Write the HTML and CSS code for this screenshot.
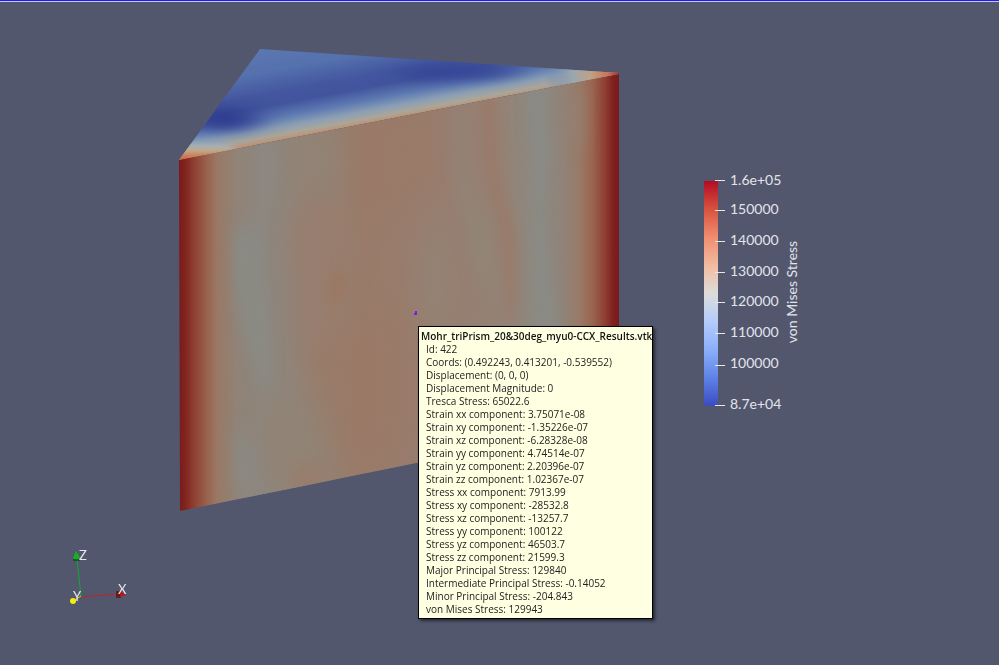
FILE: index.html
```html
<!DOCTYPE html>
<html lang="en">
<head>
<meta charset="utf-8">
<title>von Mises Stress</title>
<link rel="stylesheet" href="styles.css">
</head>
<body>
<main class="view">
  <svg class="scene" viewBox="0 0 999 665" role="img" aria-label="Stress on a triangular prism">
    <defs>
      <linearGradient id="front" gradientUnits="userSpaceOnUse" x1="179" y1="0" x2="619" y2="0">
        <stop offset="0" stop-color="#7a1a1b"/>
        <stop offset=".015" stop-color="#81251f"/>
        <stop offset=".035" stop-color="#8f4033"/>
        <stop offset=".06" stop-color="#985f4b"/>
        <stop offset=".085" stop-color="#997863"/>
        <stop offset=".13" stop-color="#918377"/>
        <stop offset=".19" stop-color="#8d8780"/>
        <stop offset=".24" stop-color="#90857a"/>
        <stop offset=".33" stop-color="#958070"/>
        <stop offset=".42" stop-color="#997b69"/>
        <stop offset=".54" stop-color="#987d6e"/>
        <stop offset=".65" stop-color="#977f71"/>
        <stop offset=".75" stop-color="#938477"/>
        <stop offset=".82" stop-color="#8c8982"/>
        <stop offset=".87" stop-color="#908479"/>
        <stop offset=".91" stop-color="#987a67"/>
        <stop offset=".94" stop-color="#9a654f"/>
        <stop offset=".97" stop-color="#8d3c31"/>
        <stop offset=".985" stop-color="#802220"/>
        <stop offset="1" stop-color="#78191b"/>
      </linearGradient>
      <linearGradient id="top" gradientUnits="userSpaceOnUse" x1="260" y1="49" x2="277" y2="140">
        <stop offset="0" stop-color="#5c77b0"/>
        <stop offset=".25" stop-color="#5571ae"/>
        <stop offset=".5" stop-color="#43569f"/>
        <stop offset=".62" stop-color="#41549d"/>
        <stop offset=".76" stop-color="#5e7ab2"/>
        <stop offset=".87" stop-color="#8b9fb4"/>
        <stop offset=".95" stop-color="#aaa69a"/>
        <stop offset="1" stop-color="#bd9377"/>
      </linearGradient>
      <linearGradient id="leftTip" gradientUnits="userSpaceOnUse" x1="0" y1="160" x2="0" y2="136">
        <stop offset="0" stop-color="#d65a3d"/>
        <stop offset=".2" stop-color="#cc8360"/>
        <stop offset=".4" stop-color="#bfa98c"/>
        <stop offset=".6" stop-color="#a3b0b5"/>
        <stop offset="1" stop-color="#6f8bbb" stop-opacity="0"/>
      </linearGradient>
      <linearGradient id="rightTip" gradientUnits="userSpaceOnUse" x1="619" y1="0" x2="545" y2="0">
        <stop offset="0" stop-color="#a82c24"/>
        <stop offset=".15" stop-color="#cc7355"/>
        <stop offset=".38" stop-color="#bea286"/>
        <stop offset=".62" stop-color="#9aa8ad"/>
        <stop offset="1" stop-color="#6983b5" stop-opacity="0"/>
      </linearGradient>
      <filter id="soft" x="-50%" y="-50%" width="200%" height="200%" color-interpolation-filters="sRGB"><feGaussianBlur stdDeviation="12 14"/></filter>
      <filter id="fine" x="-50%" y="-50%" width="200%" height="200%" color-interpolation-filters="sRGB"><feGaussianBlur stdDeviation="6 9"/></filter>
      <filter id="softer" x="-50%" y="-100%" width="200%" height="300%" color-interpolation-filters="sRGB"><feGaussianBlur stdDeviation="15 6"/></filter>
      <filter id="tipBlur" x="-50%" y="-50%" width="200%" height="200%" color-interpolation-filters="sRGB"><feGaussianBlur stdDeviation="5 1"/></filter>
      <clipPath id="frontClip"><path d="M179 160 619 74V422L180 511Z"/></clipPath>
      <clipPath id="topClip"><path d="M260 49 619 73V74L179 160Z"/></clipPath>
    </defs>

    <g clip-path="url(#topClip)">
      <path fill="url(#top)" d="M260 48 620 72V75L178 161Z"/>
      <g filter="url(#softer)">
        <ellipse cx="224" cy="119" rx="34" ry="12" fill="#303d90"/>
        <path fill="#354596" d="M390 71Q455 58 530 70L490 79 420 81Z"/>
      </g>
      <path fill="url(#leftTip)" filter="url(#tipBlur)" d="M160 166V128H208L236 150Z"/>
      <path fill="url(#rightTip)" d="M540 66 620 72V75L540 91Z"/>
    </g>

    <g clip-path="url(#frontClip)">
      <path fill="url(#front)" d="M178 160 619 74V422L178 512Z"/>
      <g filter="url(#soft)">
        <path fill="#918578" d="M285 145 337 130Q345 170 333 186L304 190Z" opacity=".8"/>
        <path fill="#987d6e" d="M292 225Q320 175 350 230L352 290Q325 320 342 360L300 350Z" opacity=".8"/>
        <path fill="#9a7966" d="M355 120Q370 105 440 100L435 170 420 205 360 215Z" opacity=".7"/>
        <path fill="#9a7967" d="M303 355Q340 325 410 305V450L350 465Z" opacity=".7"/>
        <path fill="#918476" d="M250 395Q310 400 330 480L270 500Z"/>
        <path fill="#938374" d="M436 210Q454 230 453 325H420L416 270Z"/>
      </g>
      <g filter="url(#fine)">
        <path fill="#8a8a83" d="M234 230Q230 300 248 345L262 385 272 380Q274 330 261 280L262 225Z"/>
        <path fill="#8b8982" d="M258 145Q268 170 263 205L272 203Q277 165 275 145Z"/>
        <path fill="#8b8982" d="M237 430Q228 470 244 500L258 495Q260 455 245 430Z"/>
        <path fill="#9b7863" d="M333 270Q350 270 348 288L332 312Q325 290 333 270Z"/>
        <path fill="#9a7b6a" d="M294 468 320 464 325 482 292 488Z"/>
        <path fill="#918477" d="M452 110 468 105Q456 160 482 210T495 300L475 285 455 190Z" opacity=".8"/>
        <path fill="#9a7867" d="M482 95 495 92 498 170 515 235V318H508L500 230 485 170Z" opacity=".9"/>
        <path fill="#8a8a84" d="M526 82 542 80 548 150 542 215 560 340H534L533 190Z"/>
        <path fill="#957f71" d="M562 100 586 90 584 150 565 140Z" opacity=".6"/>
      </g>
    </g>
    <path fill="#8219e8" d="M414 315V313H415V311H417V315Z"/>

    <g class="axes">
      <path stroke="#14aa25" d="M81 596 77 560"/>
      <path fill="#10b51d" d="M76 551 80 558Q76 562 73 558Z"/>
      <path stroke="#112815" stroke-width="1" d="M73 560H80"/>
      <path stroke="#c3222b" d="M81 597 117 594"/>
      <path fill="#641b22" d="M116 591H121V598H116Z"/>
      <path fill="#b9151d" d="M120 591 126 595 120 597Z"/>
      <path stroke="#ded629" d="M81 596 73 601"/>
      <circle cx="73" cy="601" r="3" fill="#f5ed09"/>
      <text x="79" y="560">Z</text>
      <text x="118" y="594">X</text>
      <text x="73" y="601">Y</text>
    </g>
  </svg>

  <svg class="legend" viewBox="0 0 110 250" role="img" aria-label="von Mises Stress scale">
    <defs>
      <linearGradient id="scale" x1="0" y1="0" x2="0" y2="1">
        <stop offset="0" stop-color="#b40b26"/>
        <stop offset=".12" stop-color="#d64f3d"/>
        <stop offset=".25" stop-color="#f18d6f"/>
        <stop offset=".38" stop-color="#f2bda2"/>
        <stop offset=".5" stop-color="#dddcdb"/>
        <stop offset=".62" stop-color="#b5cdf9"/>
        <stop offset=".75" stop-color="#8caffa"/>
        <stop offset=".88" stop-color="#5d80e6"/>
        <stop offset="1" stop-color="#3b4cc0"/>
      </linearGradient>
    </defs>
    <path fill="url(#scale)" d="M4 12H18V237H4Z"/>
    <path class="ticks" shape-rendering="crispEdges" d="M15 11H25M15 41H25M15 72H25M15 103H25M15 133H25M15 164H25M15 196H25M15 236H25"/>
    <g class="labels">
      <text x="30" y="16">1.6e+05</text>
      <text x="30" y="45">150000</text>
      <text x="30" y="76">140000</text>
      <text x="30" y="107">130000</text>
      <text x="30" y="137">120000</text>
      <text x="30" y="168">110000</text>
      <text x="30" y="199">100000</text>
      <text x="30" y="240">8.7e+04</text>
      <text text-anchor="middle" transform="translate(97 123) rotate(-90)">von Mises Stress</text>
    </g>
  </svg>

  <section class="tip" role="tooltip">
    <h1>Mohr_triPrism_20&amp;30deg_myu0-CCX_Results.vtk</h1>
    <ul>
      <li>Id: 422</li>
      <li>Coords: (0.492243, 0.413201, -0.539552)</li>
      <li>Displacement: (0, 0, 0)</li>
      <li>Displacement Magnitude: 0</li>
      <li>Tresca Stress: 65022.6</li>
      <li>Strain xx component: 3.75071e-08</li>
      <li>Strain xy component: -1.35226e-07</li>
      <li>Strain xz component: -6.28328e-08</li>
      <li>Strain yy component: 4.74514e-07</li>
      <li>Strain yz component: 2.20396e-07</li>
      <li>Strain zz component: 1.02367e-07</li>
      <li>Stress xx component: 7913.99</li>
      <li>Stress xy component: -28532.8</li>
      <li>Stress xz component: -13257.7</li>
      <li>Stress yy component: 100122</li>
      <li>Stress yz component: 46503.7</li>
      <li>Stress zz component: 21599.3</li>
      <li>Major Principal Stress: 129840</li>
      <li>Intermediate Principal Stress: -0.14052</li>
      <li>Minor Principal Stress: -204.843</li>
      <li>von Mises Stress: 129943</li>
    </ul>
  </section>
</main>
</body>
</html>
```

FILE: styles.css
```css
* { box-sizing: border-box; }
body { margin: 0; background: #52576e; }
.view {
  position: relative;
  min-height: 100vh;
  overflow: hidden;
  border-top: 1px solid #1b1bff;
  box-shadow: inset 0 1px #c8c8e4;
}
.scene {
  position: absolute;
  top: -1px;
  left: 0;
  width: 999px;
  height: 665px;
}
.axes { fill: none; stroke-width: 1; }
.axes text {
  fill: #e8e9ee;
  font: 13px Lato, sans-serif;
}
.legend {
  position: absolute;
  top: 168px;
  left: 700px;
  width: 110px;
  height: 250px;
}
.ticks { stroke: #e6e7eb; stroke-width: 1; }
.labels text {
  fill: #e3e4e9;
  font: 14px Lato, sans-serif;
}
.tip {
  position: absolute;
  top: 325px;
  left: 418px;
  padding: 3px 0 2px 2px;
  border: 1px solid #000;
  background: #ffffe1;
  box-shadow: 2px 2px 3px #0008;
  color: #222;
  font: 10px/13px "Open Sans", "Noto Sans", sans-serif;
  white-space: nowrap;
}
.tip h1 {
  margin: 0;
  color: #111;
  font-size: 10px;
  font-weight: 600;
}
.tip ul {
  margin: 0;
  padding: 0 0 0 5px;
  list-style: none;
}
```
